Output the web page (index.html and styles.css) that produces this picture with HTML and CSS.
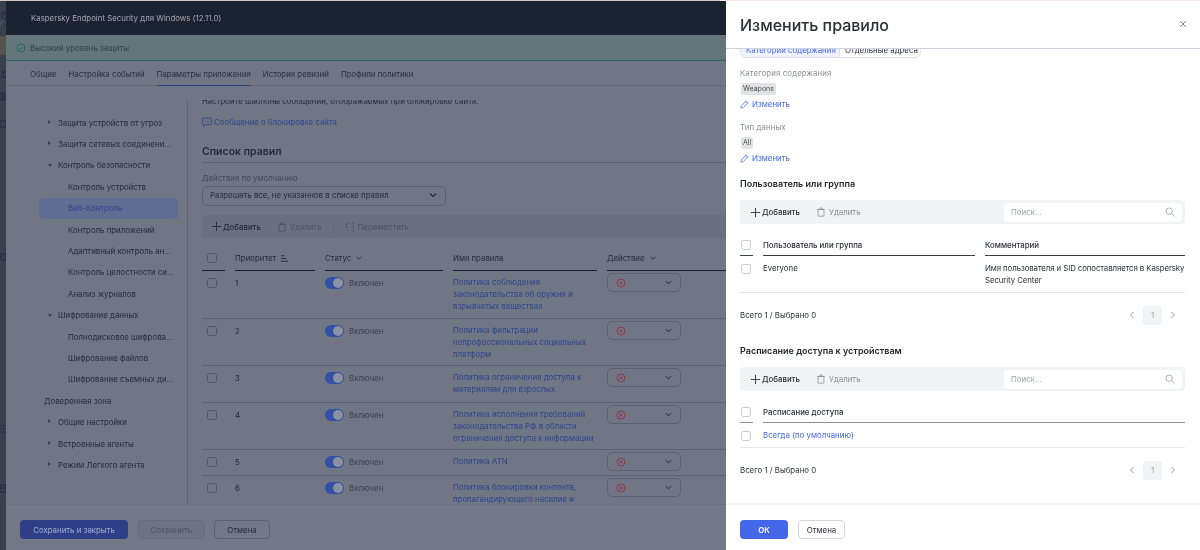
FILE: index.html
```html
<!DOCTYPE html>
<html lang="ru">
<head>
<meta charset="utf-8">
<title>Изменить правило</title>
<link rel="stylesheet" href="styles.css">
</head>
<body>
<svg class="defs" xmlns="http://www.w3.org/2000/svg">
  <symbol id="i-plus" viewBox="0 0 12 12"><path d="M6 1v10M1 6h10" fill="none" stroke="currentColor"/></symbol>
  <symbol id="i-trash" viewBox="0 0 12 12"><path d="M2.5 3h7v8h-7zM1.5 3h9M4.5 3V1.2h3V3" fill="none" stroke="currentColor" stroke-width=".9"/></symbol>
  <symbol id="i-move" viewBox="0 0 12 12"><path d="M5 2H3a1.5 1.5 0 0 0-1.5 1.5V7M0 5.5l1.5 1.7L3 5.500M5 10H3.200M8 1.500h3M8 4.500h3M8 7.500h3M8 10.500h3" fill="none" stroke="currentColor"/></symbol>
  <symbol id="i-chev" viewBox="0 0 10 10"><path d="M2 3.500l3 3 3-3" fill="none" stroke="currentColor" stroke-width="1.100"/></symbol>
  <symbol id="i-left" viewBox="0 0 10 10"><path d="M6.500 2l-3 3 3 3" fill="none" stroke="currentColor"/></symbol>
  <symbol id="i-right" viewBox="0 0 10 10"><path d="M3.500 2l3 3-3 3" fill="none" stroke="currentColor"/></symbol>
  <symbol id="i-deny" viewBox="0 0 10 10"><circle cx="5" cy="5" r="4" fill="none" stroke="currentColor"/><path d="M3.400 3.400l3.200 3.200M6.600 3.400L3.400 6.600" fill="none" stroke="currentColor"/></symbol>
  <symbol id="i-pen" viewBox="0 0 10 10"><path d="M1 9l.5-2.500L7 1l2 2-5.500 5.500zM6 2l2 2" fill="none" stroke="currentColor" stroke-width=".8"/></symbol>
  <symbol id="i-search" viewBox="0 0 10 10"><circle cx="4.200" cy="4.200" r="3.200" fill="none" stroke="currentColor" stroke-width=".8"/><path d="M6.500 6.500L9.500 9.500" fill="none" stroke="currentColor" stroke-width=".8"/></symbol>
</svg>

<div class="topline"></div>
<div class="screen">
  <svg class="rail" viewBox="0 0 6 549" xmlns="http://www.w3.org/2000/svg">
    <path d="M0 24L6 14" stroke="#4f6a6c" fill="none"/>
    <path d="M2 11h3v7H2z" stroke="#22283a" fill="none"/>
    <rect x="0" y="35" width="6" height="19" fill="#55534c"/>
    <path d="M1 71h5M1 76h5M3 71v5" stroke="#232936" fill="none"/>
    <path d="M0 92h5v7H0zM3 92v7" stroke="#232936" fill="none"/>
    <path d="M0 120h6v6H0z" stroke="#232936" fill="none"/>
    <path d="M1 253h5v6H1z" stroke="#232936" fill="none"/>
    <path d="M0 425h6M0 428h6M0 431h6" stroke="#232936" stroke-dasharray="2 1" fill="none"/>
    <path d="M0 484h6v7H0zM0 487h6" stroke="#232936" fill="none"/>
  </svg>

  <div class="app">
    <header class="app-head">Kaspersky Endpoint Security для Windows (12.11.0)</header>
    <div class="status">
      <svg class="status-ico" viewBox="0 0 10 10" xmlns="http://www.w3.org/2000/svg"><circle cx="5" cy="5" r="4" fill="none" stroke="currentColor"/><path d="M3 5.200l1.500 1.400L7 3.800" fill="none" stroke="currentColor"/></svg>
      <span>Высокий уровень защиты</span>
    </div>
    <nav class="tabs">
      <span class="tab">Общие</span>
      <span class="tab">Настройка событий</span>
      <span class="tab tab-on">Параметры приложения</span>
      <span class="tab">История ревизий</span>
      <span class="tab">Профили политики</span>
    </nav>

    <div class="main">
      <aside class="side">
        <ul class="tree">
          <li class="node l1 closed">Защита устройств от угроз</li>
          <li class="node l1 closed">Защита сетевых соединени...</li>
          <li class="node l1 open">Контроль безопасности</li>
          <li class="node l2">Контроль устройств</li>
          <li class="node l2 sel">Веб-Контроль</li>
          <li class="node l2">Контроль приложений</li>
          <li class="node l2">Адаптивный контроль ан...</li>
          <li class="node l2">Контроль целостности си...</li>
          <li class="node l2">Анализ журналов</li>
          <li class="node l1 open">Шифрование данных</li>
          <li class="node l2">Полнодисковое шифрова...</li>
          <li class="node l2">Шифрование файлов</li>
          <li class="node l2">Шифрование съемных ди...</li>
          <li class="node l0">Доверенная зона</li>
          <li class="node l1 closed">Общие настройки</li>
          <li class="node l1 closed">Встроенные агенты</li>
          <li class="node l1 closed">Режим Легкого агента</li>
        </ul>
      </aside>

      <section class="content">
        <div class="scroll">
          <p class="intro">Настройте шаблоны сообщений, отображаемых при блокировке сайта.</p>
          <a class="msg-link">
            <svg class="ico10" viewBox="0 0 10 10" xmlns="http://www.w3.org/2000/svg"><path d="M1.500 1h7a1 1 0 0 1 1 1v4.500a1 1 0 0 1-1 1H4L2 9.500v-2h-.5a1 1 0 0 1-1-1V2a1 1 0 0 1 1-1z" fill="none" stroke="currentColor" stroke-width=".8"/><path d="M3 4.300h.8M4.800 4.300h.8M6.600 4.300h.8" stroke="currentColor" stroke-width=".8"/></svg>
            Сообщение о блокировке сайта
          </a>
          <h2 class="list-title">Список правил</h2>
          <label class="field-label">Действия по умолчанию</label>
          <div class="select">
            <span>Разрешать все, не указанное в списке правил</span>
            <svg class="ico10 dark" xmlns="http://www.w3.org/2000/svg"><use href="#i-chev"/></svg>
          </div>
          <div class="toolbar">
            <span class="tool"><svg class="ico11" xmlns="http://www.w3.org/2000/svg"><use href="#i-plus"/></svg>Добавить</span>
            <span class="tool off"><svg class="ico10" xmlns="http://www.w3.org/2000/svg"><use href="#i-trash"/></svg>Удалить</span>
            <span class="tool-sep"></span>
            <span class="tool off"><svg class="ico10" xmlns="http://www.w3.org/2000/svg"><use href="#i-move"/></svg>Переместить</span>
          </div>
          <div class="rules">
            <div class="rules-head">
              <span class="th"><i class="box"></i></span>
              <span class="th">Приоритет
                <svg class="ico9" viewBox="0 0 10 10" xmlns="http://www.w3.org/2000/svg"><path d="M1 2h4M1 5h6M1 8h8" stroke="currentColor" fill="none"/></svg></span>
              <span class="th">Статус <svg class="ico8" xmlns="http://www.w3.org/2000/svg"><use href="#i-chev"/></svg></span>
              <span class="th">Имя правила</span>
              <span class="th">Действие <svg class="ico8" xmlns="http://www.w3.org/2000/svg"><use href="#i-chev"/></svg></span>
            </div>
            <div class="rule first">
              <i class="box"></i><span class="num">1</span>
              <span class="state"><i class="toggle"></i>Включен</span>
              <a class="rule-name">Политика соблюдения законодательства об оружии и взрывчатых веществах</a>
              <span class="action"><svg class="ico10 red" xmlns="http://www.w3.org/2000/svg"><use href="#i-deny"/></svg><svg class="ico9 dark" xmlns="http://www.w3.org/2000/svg"><use href="#i-chev"/></svg></span>
            </div>
            <div class="rule">
              <i class="box"></i><span class="num">2</span>
              <span class="state"><i class="toggle"></i>Включен</span>
              <a class="rule-name">Политика фильтрации непрофессиональных социальных платформ</a>
              <span class="action"><svg class="ico10 red" xmlns="http://www.w3.org/2000/svg"><use href="#i-deny"/></svg><svg class="ico9 dark" xmlns="http://www.w3.org/2000/svg"><use href="#i-chev"/></svg></span>
            </div>
            <div class="rule two">
              <i class="box"></i><span class="num">3</span>
              <span class="state"><i class="toggle"></i>Включен</span>
              <a class="rule-name">Политика ограничения доступа к материалам для взрослых</a>
              <span class="action"><svg class="ico10 red" xmlns="http://www.w3.org/2000/svg"><use href="#i-deny"/></svg><svg class="ico9 dark" xmlns="http://www.w3.org/2000/svg"><use href="#i-chev"/></svg></span>
            </div>
            <div class="rule">
              <i class="box"></i><span class="num">4</span>
              <span class="state"><i class="toggle"></i>Включен</span>
              <a class="rule-name">Политика исполнения требований законодательства РФ в области ограничения доступа к информации</a>
              <span class="action"><svg class="ico10 red" xmlns="http://www.w3.org/2000/svg"><use href="#i-deny"/></svg><svg class="ico9 dark" xmlns="http://www.w3.org/2000/svg"><use href="#i-chev"/></svg></span>
            </div>
            <div class="rule one">
              <i class="box"></i><span class="num">5</span>
              <span class="state"><i class="toggle"></i>Включен</span>
              <a class="rule-name">Политика ATN</a>
              <span class="action"><svg class="ico10 red" xmlns="http://www.w3.org/2000/svg"><use href="#i-deny"/></svg><svg class="ico9 dark" xmlns="http://www.w3.org/2000/svg"><use href="#i-chev"/></svg></span>
            </div>
            <div class="rule">
              <i class="box"></i><span class="num">6</span>
              <span class="state"><i class="toggle"></i>Включен</span>
              <a class="rule-name">Политика блокировки контента, пропагандирующего насилие и</a>
              <span class="action"><svg class="ico10 red" xmlns="http://www.w3.org/2000/svg"><use href="#i-deny"/></svg><svg class="ico9 dark" xmlns="http://www.w3.org/2000/svg"><use href="#i-chev"/></svg></span>
            </div>
          </div>
        </div>
      </section>
    </div>

    <footer class="app-foot">
      <button class="btn btn-dim-primary">Сохранить и закрыть</button>
      <button class="btn btn-dim-off">Сохранить</button>
      <button class="btn btn-dim">Отмена</button>
    </footer>
  </div>

  <aside class="drawer">
    <header class="drawer-head">
      <h1>Изменить правило</h1>
      <svg class="close" viewBox="0 0 10 10" xmlns="http://www.w3.org/2000/svg"><path d="M2 2l6 6M8 2L2 8" stroke="currentColor" fill="none"/></svg>
    </header>
    <div class="drawer-body">
      <div class="drawer-inner">
        <div class="segment">
          <span class="seg seg-on">Категории содержания</span>
          <span class="seg">Отдельные адреса</span>
        </div>
        <div class="prop first-prop">
          <div class="prop-label">Категория содержания</div>
          <span class="chip">Weapons</span>
          <a class="edit"><svg class="ico9" xmlns="http://www.w3.org/2000/svg"><use href="#i-pen"/></svg>Изменить</a>
        </div>
        <div class="prop">
          <div class="prop-label">Тип данных</div>
          <span class="chip">All</span>
          <a class="edit"><svg class="ico9" xmlns="http://www.w3.org/2000/svg"><use href="#i-pen"/></svg>Изменить</a>
        </div>

        <h3 class="sec-title first-sec">Пользователь или группа</h3>
        <div class="d-toolbar">
          <span class="tool light"><svg class="ico11" xmlns="http://www.w3.org/2000/svg"><use href="#i-plus"/></svg>Добавить</span>
          <span class="tool light off"><svg class="ico10" xmlns="http://www.w3.org/2000/svg"><use href="#i-trash"/></svg>Удалить</span>
          <span class="search"><span>Поиск...</span><svg class="ico10" xmlns="http://www.w3.org/2000/svg"><use href="#i-search"/></svg></span>
        </div>
        <div class="d-table cols3">
          <span class="dh"><i class="box light"></i></span>
          <span class="dh">Пользователь или группа</span>
          <span class="dh">Комментарий</span>
        </div>
        <div class="d-row cols3">
          <i class="box light"></i>
          <span>Everyone</span>
          <span class="comment">Имя пользователя и SID сопоставляется в Kaspersky Security Center</span>
        </div>
        <div class="pager">
          <span>Всего 1 / Выбрано 0</span>
          <span class="pages"><svg class="ico10" xmlns="http://www.w3.org/2000/svg"><use href="#i-left"/></svg><b class="page">1</b><svg class="ico10" xmlns="http://www.w3.org/2000/svg"><use href="#i-right"/></svg></span>
        </div>

        <h3 class="sec-title">Расписание доступа к устройствам</h3>
        <div class="d-toolbar">
          <span class="tool light"><svg class="ico11" xmlns="http://www.w3.org/2000/svg"><use href="#i-plus"/></svg>Добавить</span>
          <span class="tool light off"><svg class="ico10" xmlns="http://www.w3.org/2000/svg"><use href="#i-trash"/></svg>Удалить</span>
          <span class="search"><span>Поиск...</span><svg class="ico10" xmlns="http://www.w3.org/2000/svg"><use href="#i-search"/></svg></span>
        </div>
        <div class="d-table cols2">
          <span class="dh grey"><i class="box light"></i></span>
          <span class="dh grey">Расписание доступа</span>
        </div>
        <div class="d-row cols2 short">
          <i class="box light"></i>
          <a class="d-link">Всегда (по умолчанию)</a>
        </div>
        <div class="pager">
          <span>Всего 1 / Выбрано 0</span>
          <span class="pages"><svg class="ico10" xmlns="http://www.w3.org/2000/svg"><use href="#i-left"/></svg><b class="page">1</b><svg class="ico10" xmlns="http://www.w3.org/2000/svg"><use href="#i-right"/></svg></span>
        </div>
      </div>
    </div>
    <footer class="drawer-foot">
      <button class="btn btn-ok">ОК</button>
      <button class="btn btn-cancel">Отмена</button>
    </footer>
  </aside>
</div>
</body>
</html>
```

FILE: styles.css
```css
* { box-sizing: border-box; }
html, body { margin: 0; height: 550px; overflow: hidden; }
body {
  font-family: Inter, "Noto Sans", sans-serif;
  font-size: 7.85px;
  line-height: 12px;
  color: #262c3a;
  background: #3b404d;
}
.defs { display: none; }
a { text-decoration: none; }
ul { list-style: none; margin: 0; padding: 0; }
i { display: block; }
p, h1, h2, h3 { margin: 0; }
button { font: inherit; }
svg { flex: none; display: block; }

.ico8 { width: 8px; height: 8px; }
.ico9 { width: 9px; height: 9px; }
.ico10 { width: 10px; height: 10px; }
.ico11 { width: 11px; height: 11px; }
.red { color: #96384a; }
.dark { color: #262c3a; }

.topline { height: 1px; background: linear-gradient(90deg, #d3c8bf 0 60%, #fbe9e4 60%); }
.screen { display: flex; height: 549px; filter: blur(.25px); }
.rail { width: 6px; height: 549px; background: #3b404d; }

/* dimmed application */
.app { width: 720px; display: flex; flex-direction: column; background: #707683; }
.app-head {
  height: 34px; flex: none; display: flex; align-items: center;
  padding-left: 25px; background: #1c2330; color: #a3a8b2;
}
.status {
  height: 26px; flex: none; display: flex; align-items: center; gap: 4px;
  padding-left: 10px; background: #65767b; border-bottom: 1px solid #1f6a63; color: #323d43;
}
.status-ico { width: 10px; height: 10px; color: #1f6a63; }
.tabs {
  height: 25px; flex: none; display: flex; gap: 12px; padding-left: 24px;
  border-bottom: 1px solid #636976; color: #2a3040;
}
.tab { padding-top: 7px; height: 24px; }
.tab-on { border-bottom: 1px solid #2e4390; height: 25px; color: #2a3040; }

.main { flex: 1; display: flex; min-height: 0; }
.side { width: 182px; flex: none; margin-top: 14px; border-right: 1px solid #5c626f; padding: 12px 9px 0 33px; }
.tree { display: flex; flex-direction: column; }
.node { height: 21.4px; display: flex; align-items: center; white-space: nowrap; position: relative; }
.l0 { padding-left: 5px; }
.l1 { padding-left: 19px; }
.l2 { padding-left: 29px; }
.sel { background: #5f6d92; border-radius: 4px; color: #2e4390; }
.closed::before, .open::before { content: ""; position: absolute; border-style: solid; }
.closed::before { left: 9px; top: 8px; border-width: 2.500px 0 2.500px 3.500px; border-color: transparent transparent transparent #3e4452; }
.open::before { left: 8.500px; top: 9.500px; border-width: 3.500px 2.500px 0; border-color: #3e4452 transparent transparent; }

.content { flex: 1; min-width: 0; padding: 14px 0 0 14px; overflow: hidden; }
.scroll { height: 100%; width: 538px; overflow: hidden; }
.intro { margin-top: -5px; white-space: nowrap; }
.msg-link { display: flex; align-items: center; gap: 2px; margin-top: 9px; color: #2e4390; }
.list-title {
  margin-top: 17px; padding-bottom: 3px; font-size: 10.500px; line-height: 14px; font-weight: 600;
  border-bottom: 1px solid #5c626f;
}
.field-label { display: block; margin-top: 9px; color: #424856; }
.select {
  margin-top: 2px; width: 244px; height: 20px; display: flex; align-items: center;
  justify-content: space-between; padding: 0 7px 2px; border: 1px solid #5c626f; border-radius: 5px;
}
.toolbar {
  margin-top: 9px; height: 23px; display: flex; align-items: center; padding-left: 9px; gap: 16px;
  background: #6a707d; border-radius: 4px;
}
.tool { display: flex; align-items: center; gap: 1px; font-weight: 500; }
.tool.off { color: #4c5261; font-weight: 400; gap: 3px; }
.tool-sep { width: 1px; height: 14px; background: #636976; margin: 0 -5px; }

.rules { margin-top: 9px; }
.rules-head, .rule { display: grid; grid-template-columns: 23px 80px 118px 144px 130px; column-gap: 10px; }
.rules-head { height: 24px; }
.th { display: flex; align-items: center; gap: 4px; border-bottom: 1px solid #1c2330; padding-bottom: 1px; }
.th:first-child { padding-left: 5px; }
.box { width: 10px; height: 10px; border: 1px solid #525866; border-radius: 2.500px; }
.rule { min-height: 47px; border-bottom: 1px solid #5c626f; padding-top: 6px; }
.rule.first { min-height: 48px; }
.rule.two { min-height: 37px; }
.rule.one { min-height: 26px; }
.rule > .box { margin: 1px 0 0 5px; }
.state { display: flex; gap: 5px; align-items: flex-start; color: #3a404e; }
.toggle { width: 19px; height: 12px; border-radius: 6px; background: #3350a8; position: relative; }
.toggle::after { content: ""; position: absolute; right: 1px; top: 1px; width: 10px; height: 10px; border-radius: 50%; background: #8b91a0; }
.rule-name { color: #2e4390; line-height: 11.800px; }
.action {
  width: 74px; height: 19px; margin-top: -4px; display: flex; align-items: center; justify-content: space-between;
  padding: 0 7px 0 8px; border: 1px solid #5c626f; border-radius: 5px;
}

.app-foot {
  height: 46px; flex: none; display: flex; align-items: flex-start; gap: 9px; padding: 15px 0 0 14px;
  background: #727885; border-top: 1px solid #6a707d; position: relative; z-index: 1;
}
.btn { height: 19px; padding: 0; border-radius: 4px; border: 1px solid transparent; }
.btn-dim-primary { width: 108px; background: #2e3f88; color: #a3acd0; }
.btn-dim-off { width: 67px; background: #6d7380; border-color: #666c79; color: #4c5261; margin-left: 1px; }
.btn-dim { width: 56px; background: transparent; border-color: #5c626f; color: #262c3a; }

/* drawer */
.drawer { width: 474px; flex: none; display: flex; flex-direction: column; background: #fff; color: #2b2f36; }
.drawer-head {
  height: 48px; flex: none; display: flex; align-items: center; justify-content: space-between;
  padding: 0 12px 0 14px; border-bottom: 1px solid #cdd2e0;
}
.drawer-head h1 { font-size: 16px; line-height: 22px; font-weight: 500; color: #2b2f36; }
.close { width: 10px; height: 10px; color: #7d8289; margin-bottom: 2px; }
.drawer-body { flex: 1; min-height: 0; overflow: hidden; }
.drawer-inner { padding: 0 15px 0 14px; margin-top: -8px; }
.segment { display: inline-flex; height: 17px; border: 1px solid #dfe2e8; border-radius: 6px; width: 181px; overflow: hidden; }
.seg { display: flex; align-items: center; padding: 0 5px; white-space: nowrap; }
.seg-on { width: 99px; flex: none; background: #eef2ff; color: #4367e8; border-right: 1px solid #dfe2e8; }
.prop { display: flex; flex-direction: column; align-items: flex-start; }
.first-prop { margin-top: 9px; }
.prop + .prop { margin-top: 11px; }
.prop-label { color: #8a8f96; letter-spacing: .1px; }
.chip { margin: 4px 0 0 1px; height: 12px; padding: 0 2px; font-size: 7px; line-height: 12px; background: #e0e2e6; border-radius: 2px; color: #4a4f57; }
.edit { display: flex; align-items: center; gap: 3px; margin-top: 3px; color: #4367e8; }
.sec-title { font-size: 9px; line-height: 13px; font-weight: 600; color: #23272e; }
.first-sec { margin-top: 13px; }
.d-toolbar {
  margin-top: 10px; height: 24px; display: flex; align-items: center; gap: 16px; padding: 0 3px 0 10px;
  background: #f2f3f5; border-radius: 4px;
}
.tool.light { color: #2b2f36; }
.tool.light.off { color: #8a8f96; }
.search {
  margin-left: auto; width: 178px; height: 19px; display: flex; align-items: center; justify-content: space-between;
  padding: 0 7px; background: #fff; border-radius: 4px; color: #9a9ea5;
}
.d-table, .d-row { display: grid; column-gap: 10px; }
.cols3 { grid-template-columns: 13px 212px 200px; }
.cols2 { grid-template-columns: 13px 1fr; }
.d-table { height: 32px; margin-top: 0; }
.dh { display: flex; align-items: center; border-bottom: 1px solid #3a3e45; padding: 10px 0 0 0; font-weight: 500; color: #2b2f36; }
.dh.grey { border-bottom-color: #8d9197; }
.dh .box { margin-left: 1px; }
.box.light { border-color: #c6c9ce; }
.d-row { padding-top: 7px; min-height: 37px; border-bottom: 1px solid #e4e6e9; line-height: 11.500px; }
.d-row.short { min-height: 25px; }
.d-row > .box { margin: 1px 0 0 1px; }
.comment { margin-right: -2px; letter-spacing: -.1px; }
.d-link { color: #4367e8; }
.pager { height: 44px; display: flex; align-items: center; justify-content: space-between; padding-right: 7px; }
.pager + .sec-title { margin-top: 7px; }
.pages { display: flex; align-items: center; gap: 6px; color: #9a9ea5; }
.page { width: 19px; height: 19px; display: flex; align-items: center; justify-content: center; font-weight: 400; background: #f2f3f5; border-radius: 3px; }
.drawer-foot {
  height: 47px; flex: none; display: flex; align-items: flex-start; gap: 10px; padding: 15px 0 0 14px;
  border-top: 2px solid #f2f3f5;
}
.btn-ok { width: 48px; background: #4367e8; color: #fff; font-weight: 600; }
.btn-cancel { width: 47px; background: #fff; border-color: #d3d6da; color: #2b2f36; }
```
